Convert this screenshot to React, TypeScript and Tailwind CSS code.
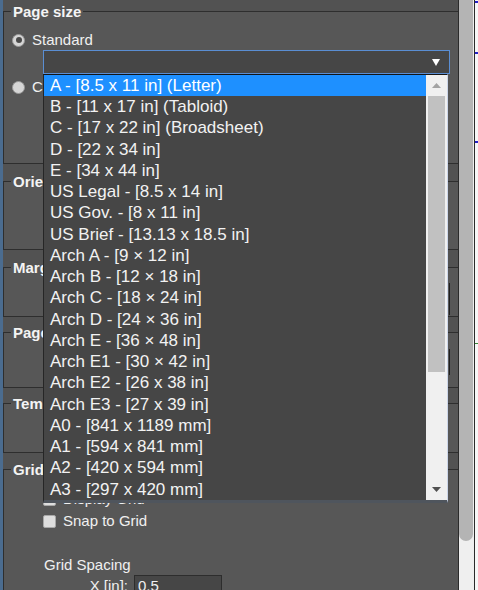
import * as React from "react";

const sizes = [
  "A - [8.5 x 11 in] (Letter)",
  "B - [11 x 17 in] (Tabloid)",
  "C - [17 x 22 in] (Broadsheet)",
  "D - [22 x 34 in]",
  "E - [34 x 44 in]",
  "US Legal - [8.5 x 14 in]",
  "US Gov. - [8 x 11 in]",
  "US Brief - [13.13 x 18.5 in]",
  "Arch A - [9 × 12 in]",
  "Arch B - [12 × 18 in]",
  "Arch C - [18 × 24 in]",
  "Arch D - [24 × 36 in]",
  "Arch E - [36 × 48 in]",
  "Arch E1 - [30 × 42 in]",
  "Arch E2 - [26 x 38 in]",
  "Arch E3 - [27 x 39 in]",
  "A0 - [841 x 1189 mm]",
  "A1 - [594 x 841 mm]",
  "A2 - [420 x 594 mm]",
  "A3 - [297 x 420 mm]",
];

const Radio: React.FC<{ checked?: boolean }> = ({ checked }) => (
  <div className="w-[13px] h-[13px] rounded-full bg-[#d6d6d6] border border-[#9a9a9a] flex items-center justify-center shrink-0">
    {checked && <div className="w-[6px] h-[6px] rounded-full bg-[#4a4a4a]" />}
  </div>
);

const Checkbox: React.FC = () => (
  <div className="w-[13px] h-[13px] rounded-[2px] bg-[#dedede] border border-[#a8a8a8] shrink-0" />
);

const Section: React.FC<{ title: string; className?: string; children?: React.ReactNode }> = ({
  title,
  className,
  children,
}) => (
  <fieldset className={"border border-r-0 border-[#2e2e2e] bg-[#575757] pl-[7px] pr-[8px] " + (className ?? "")}>
    <legend className="px-[2px] text-[15px] leading-[17px] font-bold text-[#f4f4f4]">{title}</legend>
    {children}
  </fieldset>
);

export default function App() {
  return (
    <div className="relative flex w-[478px] h-[590px] overflow-hidden bg-white font-['Liberation_Sans',Arial,sans-serif] text-[#f0f0f0]">
      {/* settings panel */}
      <div className="w-[459px] h-full bg-[#525252] border-l-[3px] border-l-[#4b6c8f] border-r border-r-[#2b2b2b] pt-[3px]">
        <Section title="Page size">
          <div className="h-[143px] flex flex-col">
            <div className="mt-[12px] h-[16px] flex items-center gap-[7px] ml-[1px]">
              <Radio checked />
              <span className="text-[15px]">Standard</span>
            </div>
            <div className="mt-[2px] ml-[32px] w-[407px] h-[24px] bg-[#464646] border border-[#5a8ed3] flex items-center justify-end pr-[9px]">
              <svg width="8" height="7" viewBox="0 0 8 7">
                <path d="M0 0H8L4 7Z" fill="#ffffff" />
              </svg>
            </div>
            <div className="mt-[5px] h-[16px] flex items-center gap-[7px] ml-[1px]">
              <Radio />
              <span className="text-[15px]">Custom</span>
            </div>
          </div>
        </Section>
        <Section title="Orientation" className="mt-[9px]">
          <div className="h-[59px]" />
        </Section>
        <Section title="Margins" className="mt-[9px]">
          <div className="h-[40px] flex justify-end">
            <div className="mt-[7px] w-[60px] h-[32px] border-r border-[#1f1f1f]" />
          </div>
        </Section>
        <Section title="Page Color" className="mt-[7px]">
          <div className="h-[46px] flex justify-end">
            <div className="mt-[8px] w-[60px] h-[26px] border-r border-[#1f1f1f]" />
          </div>
        </Section>
        <Section title="Template" className="mt-[7px]">
          <div className="h-[40px]" />
        </Section>
        <Section title="Grid" className="mt-[8px]">
          <div className="flex flex-col text-[15px]">
            <div className="mt-[13px] ml-[32px] h-[16px] flex items-center gap-[7px]">
              <Checkbox />
              <span>Display Grid</span>
            </div>
            <div className="mt-[6px] ml-[32px] h-[16px] flex items-center gap-[7px]">
              <Checkbox />
              <span>Snap to Grid</span>
            </div>
            <div className="mt-[28px] ml-[33px] h-[16px] leading-[16px]">Grid Spacing</div>
            <div className="mt-[2px] ml-[32px] flex items-start gap-[6px]">
              <span className="w-[85px] text-right leading-[22px]">X [in]:</span>
              <div className="w-[88px] h-[22px] bg-[#464646] border border-[#2d2d2d] px-[3px] leading-[20px]">0.5</div>
            </div>
          </div>
        </Section>
      </div>

      {/* page scrollbar */}
      <div className="w-[15px] h-full bg-[#efefef]">
        <div className="w-[14px] h-[541px] bg-[#b4b4b4] rounded-b-[7px]" />
      </div>
      <div className="w-px h-full bg-[#2a2a2a]" />
      <div className="relative w-[3px] h-full bg-[#f7f7f7]">
        <div className="absolute left-0 top-[1px] w-[3px] h-[2px] bg-[#2424c8]" />
        <div className="absolute left-0 top-[52px] w-[3px] h-[2px] bg-[#2424c8]" />
        <div className="absolute left-0 top-[141px] w-[3px] h-[2px] bg-[#2424c8]" />
        <div className="absolute left-0 top-[343px] w-[3px] h-[1px] bg-[#3a8a3a]" />
      </div>

      {/* open dropdown list */}
      <div className="absolute left-[43px] top-[74px] w-[405px] h-[429px] flex border-l border-l-[#262626] border-t border-t-[#151515] border-r border-r-[#cbd5e9] border-b-[3px] border-b-[#4f555d]">
        <div className="flex-1 bg-[#464646]">
          {sizes.map((s, i) => (
            <div
              key={s}
              className={
                i === 0
                  ? "h-[21.25px] flex items-center pl-[6px] text-[17px] whitespace-nowrap bg-[#1e90ff] text-white"
                  : "h-[21.25px] flex items-center pl-[6px] text-[17px] whitespace-nowrap text-[#f2f2f2]"
              }
            >
              {s}
            </div>
          ))}
        </div>
        <div className="w-[21px] h-full bg-[#f0f0f0] flex flex-col">
          <div className="h-[21px] flex items-center justify-center">
            <svg width="9" height="5" viewBox="0 0 9 5">
              <path d="M0 5L4.5 0L9 5Z" fill="#a3a3a3" />
            </svg>
          </div>
          <div className="ml-[2px] w-[17px] h-[276px] bg-[#c1c1c1]" />
          <div className="flex-1" />
          <div className="h-[21px] flex items-center justify-center">
            <svg width="9" height="5" viewBox="0 0 9 5">
              <path d="M0 0H9L4.5 5Z" fill="#505050" />
            </svg>
          </div>
        </div>
      </div>
    </div>
  );
}
